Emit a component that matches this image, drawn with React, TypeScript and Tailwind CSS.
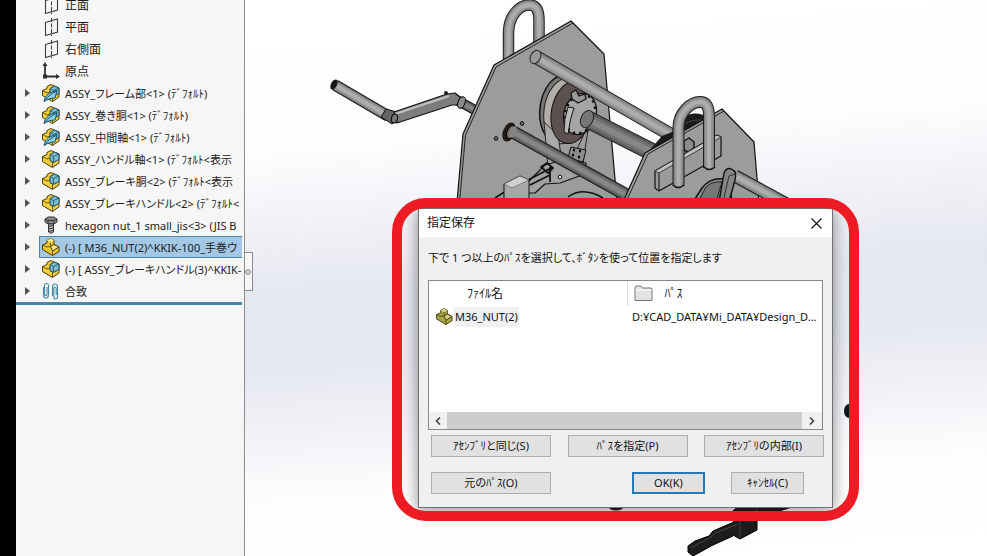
import { useState } from "react";
import type { ReactNode } from "react";
import clsx from "clsx";

type IconKind = "plane" | "origin" | "flexible" | "assembly" | "bolt" | "part" | "mates";

interface TreeItem {
  id: number;
  icon: IconKind;
  label: string;
  expandable: boolean;
}

const treeItems: TreeItem[] = [
  { id: 1, icon: "plane", label: "正面", expandable: false },
  { id: 2, icon: "plane", label: "平面", expandable: false },
  { id: 3, icon: "plane", label: "右側面", expandable: false },
  { id: 4, icon: "origin", label: "原点", expandable: false },
  { id: 5, icon: "flexible", label: "ASSY_フレーム部<1> (ﾃﾞﾌｫﾙﾄ)", expandable: true },
  { id: 6, icon: "flexible", label: "ASSY_巻き胴<1> (ﾃﾞﾌｫﾙﾄ)", expandable: true },
  { id: 7, icon: "flexible", label: "ASSY_中間軸<1> (ﾃﾞﾌｫﾙﾄ)", expandable: true },
  { id: 8, icon: "assembly", label: "ASSY_ハンドル軸<1> (ﾃﾞﾌｫﾙﾄ<表示", expandable: true },
  { id: 9, icon: "assembly", label: "ASSY_ブレーキ胴<2> (ﾃﾞﾌｫﾙﾄ<表示", expandable: true },
  { id: 10, icon: "assembly", label: "ASSY_ブレーキハンドル<2> (ﾃﾞﾌｫﾙﾄ<", expandable: true },
  { id: 11, icon: "bolt", label: "hexagon nut_1 small_jis<3> (JIS B", expandable: true },
  { id: 12, icon: "part", label: "(-) [ M36_NUT(2)^KKIK-100_手巻ウ", expandable: true },
  { id: 13, icon: "assembly", label: "(-) [ ASSY_ブレーキハンドル(3)^KKIK-", expandable: true },
  { id: 14, icon: "mates", label: "合致", expandable: true },
];

function PartShape({ body, light }: { body: string; light: string }) {
  return (
    <g stroke="#4a3d08" strokeWidth="1" strokeLinejoin="round">
      <path d="M.5 7 5 5V2.500L8.500 .5 12 2.500V6.500L17 9V13.500L10.500 17.500 .5 11.500Z" fill={body} />
      <path d="M5 2.500 8.500 .5 12 2.500 8.500 4.500Z" fill={light} stroke="none" />
      <path d="M8.500 8.500 12 6.500 17 9 10.500 13Z" fill={light} />
      <path d="M.5 7 5 9 8.500 8.500V4.500M10.500 13V17.500" fill="none" strokeWidth=".8" />
    </g>
  );
}

function TreeIcon({ kind }: { kind: IconKind }) {
  return (
    <svg viewBox="0 0 18 18" className="size-[18px] shrink-0" aria-hidden="true">
      {kind === "plane" && (
        <g fill="none" stroke="#3c3c3c" strokeWidth="1.1">
          <path d="M3.500 4.500 15.500 1V14L3.500 17.500Z" />
          <path d="M9.500 0V18" strokeDasharray="4 1.500" />
        </g>
      )}
      {kind === "origin" && (
        <g stroke="#2f2f2f" strokeWidth="1.800" fill="#2f2f2f">
          <path d="M3 3V14.500H16" fill="none" />
          <path d="M.5 4 3 0 5.500 4ZM14 12 18 14.500 14 17Z" stroke="none" />
          <rect x="1" y="12.500" width="4" height="4" stroke="none" />
        </g>
      )}
      {(kind === "assembly" || kind === "flexible") && (
        <g strokeLinejoin="round">
          <path
            d="M.5 6.500 5 4.500V2.500L9 .5 12 2 17 4V13L10.500 17.500 .5 11.500Z"
            fill="#f1cf3c"
            stroke="#4a3d08"
          />
          <path d="M.5 6.500 5 9 8 8M10.500 12.500V17.500M8 10.500 10.500 12.500" fill="none" stroke="#4a3d08" strokeWidth=".8" />
          <path d="M8 4.500 12.500 2 17 4V9.500L11.500 12.500 8 10.500Z" fill="#78bdd6" stroke="#1f4c5c" />
          <path d="M8 4.500 11.500 6.500 17 4M11.500 6.500V12" fill="none" stroke="#1f4c5c" strokeWidth=".8" />
        </g>
      )}
      {kind === "flexible" && (
        <g>
          <path d="M2 17.500C3 11 8 8 15 6.500L13 14C9 14 6 15 2 17.500Z" fill="#8fd0e6" stroke="#17506c" />
          <path d="M3 17C6 12 9 10 14 7.500" stroke="#17506c" fill="none" />
        </g>
      )}
      {kind === "bolt" && (
        <g stroke="#333" strokeLinejoin="round">
          <path d="M3 3 6 1H12L15 3V6L12 8H6L3 6Z" fill="#8a8a8a" />
          <path d="M3 3 6 4.500H12L15 3M6 4.500V8M12 4.500V8" fill="none" />
          <path d="M6.500 8H11.500V16L9 17.500 6.500 16Z" fill="#bdbdbd" />
          <path d="M6.500 10.500 11.500 9.500M6.500 13 11.500 12M6.500 15.500 11.500 14.500" />
        </g>
      )}
      {kind === "part" && <PartShape body="#efc52d" light="#fbe88a" />}
      {kind === "mates" && (
        <g fill="none" stroke="#4489a3" strokeWidth="1.100">
          <path d="M1.500 5V13Q1.500 16 4 16T6.500 13V3.500Q6.500 1.500 4.500 1.500T2.500 3.500V12Q2.500 13.500 3.800 13.500T5 12V5" />
          <path d="M10.500 14V5Q10.500 2 13 2T15.500 5V14.500Q15.500 17 13.500 17T11.800 14.500V6.500Q11.800 5 13 5T14.200 6.500V13" />
        </g>
      )}
    </svg>
  );
}

function FeatureTree() {
  const [selected, setSelected] = useState(12);

  return (
    <aside className="w-[229px] shrink-0 border-r border-[#8c8c8c] bg-[#f6f6f6] pr-0.5">
      <ul className="-mt-1.5 border-b-[3px] border-[#4a86a8]">
        {treeItems.map((item) => (
          <li key={item.id} className="flex h-[22px] items-center">
            <span className="flex w-[23px] shrink-0 justify-center">
              {item.expandable && (
                <button aria-label="展開" className="cursor-pointer">
                  <svg viewBox="0 0 5 8" className="h-2 w-[5px]">
                    <path d="M0 0 5 4 0 8Z" fill="#555" />
                  </svg>
                </button>
              )}
            </span>
            <button
              onClick={() => setSelected(item.id)}
              className={clsx(
                "flex h-[22px] min-w-0 flex-1 items-center gap-[5px] border border-r-0 pl-0.5 text-left",
                selected === item.id ? "border-[#4f86a8] bg-[#a3c8e6]" : "border-transparent"
              )}
            >
              <TreeIcon kind={item.icon} />
              <span
                className={clsx(
                  "whitespace-pre pt-0.5 leading-[18px] text-[#1c1c1c]",
                  item.expandable ? "text-[11px]" : "text-[12px]"
                )}
              >
                {item.label}
              </span>
            </button>
          </li>
        ))}
      </ul>
    </aside>
  );
}

function Tube({ d, w, dark = false }: { d: string; w: number; dark?: boolean }) {
  return (
    <g fill="none">
      <path d={d} stroke="#1d1d1d" strokeWidth={w + 2} />
      <path d={d} stroke={dark ? "#5a5a5a" : "#808080"} strokeWidth={w} />
      <path d={d} stroke={dark ? "#707070" : "#979797"} strokeWidth={w * 0.75} />
      <path d={d} stroke={dark ? "#868686" : "#adadad"} strokeWidth={w * 0.4} />
    </g>
  );
}

// Hand winch assembly, drawn in screen coordinates
function WinchModel() {
  return (
    <svg
      viewBox="245 0 742 556"
      className="absolute top-0 left-0 h-[556px] w-[742px]"
      strokeLinejoin="round"
      aria-hidden="true"
    >
      {/* crank */}
      <Tube d="M453 98 482 114" w={8} dark />
      <Tube d="M335 85 388 116" w={9.500} />
      <ellipse cx="334" cy="84.500" rx="3" ry="5.500" transform="rotate(28 334 84.500)" fill="#161616" />
      <path d="M386 109 381 117 392 124 399 119 397 112Z" fill="#666" stroke="#111" />
      <path d="M394 112 447 94 455 93 461 98 459 105 452 105 397 123Z" fill="#7d7d7d" stroke="#111" strokeWidth="1.200" />
      <path d="M395 114 449 96" stroke="#c0c0c0" strokeWidth="2" />
      <circle cx="446" cy="93" r="2" fill="#222" />
      <ellipse cx="394.500" cy="118.500" rx="3" ry="4.500" transform="rotate(15 394.500 118.500)" fill="#777" stroke="#000" />
      <ellipse cx="461.500" cy="102.500" rx="3.500" ry="6" transform="rotate(20 461.500 102.500)" fill="#8c8c8c" stroke="#000" />

      {/* rear plate */}
      <Tube d="M508.500 64V32C509 15 520 5 529 5 536 5 539 10 539 20V50" w={9.500} />
      <path d="M457 202 463 134 494 65 571 21 604 54 607 88 617 202Z" fill="#9c9c9c" stroke="#111" strokeWidth="1.200" />
      <path d="M459.500 202 465.500 135 496 67 573 23" fill="none" stroke="#222" strokeWidth="1" />

      {/* drum and ratchet */}
      <ellipse cx="561" cy="109" rx="21" ry="34" transform="rotate(8 561 109)" fill="#777" stroke="#111" strokeWidth="1.500" />
      <ellipse cx="565" cy="111" rx="21" ry="33" transform="rotate(8 565 111)" fill="#b2aea9" stroke="#222" />
      <path d="M544 122 548 167 562 162 558 135Z" fill="#a9a9a9" stroke="#222" />
      <ellipse cx="572" cy="112" rx="20.500" ry="32" transform="rotate(12 572 112)" fill="#5c5150" stroke="#111" />
      <path d="M586 130 571 162 583 162 589 124Z" fill="#9c9c9c" stroke="#222" />
      <path d="M592 92 600 76 606 100 608 140 596 140Z" fill="#9c9c9c" />
      <ellipse cx="580" cy="114" rx="16" ry="21" transform="rotate(18 580 114)" fill="#a5a5a5" stroke="#111" strokeWidth="1.300" />
      <ellipse cx="580" cy="114" rx="15" ry="20" transform="rotate(18 580 114)" fill="none" stroke="#111" strokeWidth="3" strokeDasharray="2.500 4" />
      <path d="M568 107Q564 118 564 132L568 134Q570 118 574 108Z" fill="#bbb" stroke="#111" />
      <path d="M571 93 576 90 579 96 585 94 586 99 578 103 572 99Z" fill="#999" stroke="#111" strokeWidth="1.300" />
      <Tube d="M587 119 652 152" w={16} dark />
      <ellipse cx="587" cy="119" rx="6" ry="9" transform="rotate(25 587 119)" fill="#777" stroke="#222" />
      <Tube d="M536 57 680 140" w={12} />
      <ellipse cx="535.500" cy="57" rx="5" ry="7" transform="rotate(28 535.500 57)" fill="#999" stroke="#222" />

      {/* brake linkage */}
      <path d="M571 147 586 150 583 162 568 158Z" fill="#8c8c8c" stroke="#111" />
      <path d="M573 150H575M579 151H581M572 155H574M578 157H580" stroke="#000" strokeWidth="2.500" />
      <path d="M527 183 545 165 566 159 586 163 585 174 560 183 545 184 535 193 527 193Z" fill="#a2a2a2" stroke="#111" strokeWidth="1.200" />
      <path d="M528 180 553 167M530 185 550 175M550 167V182M541 167 547 163 553 168 548 173Z" fill="none" stroke="#111" strokeWidth="1.800" />
      <circle cx="560" cy="177" r="1.800" fill="#eee" stroke="#111" />
      <path d="M495 198 506 191M568 197Q583 186 603 198" fill="none" stroke="#111" strokeWidth="1.500" />
      <path d="M504 184 520 176 529 180V200H504Z" fill="#a8a8a8" stroke="#111" />
      <path d="M504 184 512 188 529 180 520 176Z" fill="#cfcfcf" stroke="#555" strokeWidth=".6" />

      <ellipse cx="509" cy="132" rx="6" ry="10" transform="rotate(22 509 132)" fill="#211b18" />
      <ellipse cx="511" cy="132" rx="4" ry="7" transform="rotate(22 511 132)" fill="#756a60" stroke="#000" />
      <Tube d="M513 132 632 198" w={11} dark />
      <ellipse cx="513" cy="132" rx="3.500" ry="6" transform="rotate(26 513 132)" fill="#858585" />
      <circle cx="496" cy="138.500" r="1.800" fill="#777" stroke="#000" />
      <circle cx="522" cy="123.500" r="1.800" fill="#777" stroke="#000" />

      {/* front plate */}
      <path d="M648 152 662 136 672 132 682 117Q697 110 707 117L690 140Z" fill="#1b1b1b" />
      <path d="M684 124Q696 118 704 121" fill="none" stroke="#777" strokeDasharray="1.500 1.500" />
      <path d="M623 202 645 153 722 109 754 142 759 202Z" fill="#9c9c9c" stroke="#111" strokeWidth="1.200" />
      <path d="M626 202 648 154 724 111" fill="none" stroke="#222" />
      <path d="M684 141 689 138 694 142 694 148 688 152 684 150Z" fill="#8c8c8c" stroke="#111" strokeWidth="1.400" />
      <path d="M655 171 717 135 721 137V156L659 191 655 188Z" fill="#9a9a9a" stroke="#111" strokeWidth="1.200" />
      <path d="M655 171 717 135 721 137 659 173Z" fill="#c2c2c2" stroke="#222" strokeWidth=".8" />
      <path d="M659 173V191" stroke="#111" />
      <Tube d="M678.500 186V127C679 112 691 102 700 102 707 102 709 107 709 117V168" w={10} />
      <path d="M673 185Q678 190 684 185M704 167Q709 172 715 167" fill="none" stroke="#111" strokeWidth="1.500" />
      <path d="M693 202 702 188Q710 177 725 179L733 202Z" fill="#8b8b8b" stroke="#111" strokeWidth="1.500" />
      <path d="M698 202 706 187Q712 181 722 182L716 202Z" fill="#777" stroke="#222" />
      <Tube d="M735 176 792 207" w={11} />
      <path d="M719 202 724 173Q727 166 733 170 737 172 735 180L729 202Z" fill="#868686" stroke="#111" strokeWidth="1.400" />
      <path d="M723 202 729 176 735 174" fill="none" stroke="#333" />

      {/* parts below the dialog */}
      <ellipse cx="849" cy="411" rx="5" ry="7" fill="#11151f" />
      <ellipse cx="616" cy="506" rx="8" ry="4.500" fill="#202020" />
      <path d="M728 515 740 505H798L776 512 757 518V530L740 539 733 535V536L713 545 693 556 688 552V546L695 541 709 536 713 531 734 522Z" fill="#1d1d1d" stroke="#000" />
      <path d="M740 520V538M691 548 711 537 715 533 738 524M757 508V518" fill="none" stroke="#444" />
    </svg>
  );
}

function DialogButton({
  children,
  primary = false,
  small = false,
}: {
  children: ReactNode;
  primary?: boolean;
  small?: boolean;
}) {
  return (
    <button
      className={clsx(
        "flex h-[22px] items-center justify-center whitespace-nowrap bg-[#e1e1e1] text-[11px] leading-4 text-[#111]",
        small ? "w-[73px]" : "w-[120px]",
        primary ? "border-2 border-[#2878b4]" : "border border-[#adadad]"
      )}
    >
      {children}
    </button>
  );
}

function FileTable() {
  return (
    <table className="w-full table-fixed border-collapse text-left">
      <colgroup>
        <col className="w-[198px]" />
        <col />
      </colgroup>
      <thead>
        <tr className="h-[25px] text-[12px] leading-4">
          <th className="border-r border-[#dedede] pl-[38px] font-normal">ﾌｧｲﾙ名</th>
          <th className="pl-1.5 font-normal">
            <span className="flex items-center gap-3">
              <svg viewBox="0 0 19 17" className="h-[17px] w-[19px]" aria-hidden="true">
                <path d="M1 15.500V2.500L2 1H7L8.500 3H17L18 4V15.500Z" fill="#e3e3e3" stroke="#777" />
                <path d="M1.500 5H17.500" stroke="#fff" />
              </svg>
              ﾊﾟｽ
            </span>
          </th>
        </tr>
      </thead>
      <tbody>
        <tr className="h-[21px] text-[11px] leading-4">
          <td className="p-0 pl-[7px]">
            <span className="flex items-center gap-px">
              <svg viewBox="0 0 18 18" className="size-[17px]" aria-hidden="true">
                <PartShape body="#a8a648" light="#d3d183" />
              </svg>
              <span className="bg-[#f0f0f0] px-px py-0.5">M36_NUT(2)</span>
            </span>
          </td>
          <td className="truncate p-0 pl-[5px]">D:¥CAD_DATA¥Mi_DATA¥Design_D...</td>
        </tr>
      </tbody>
    </table>
  );
}

function SaveAsDialog() {
  return (
    <div
      role="dialog"
      aria-labelledby="dialog-title"
      className="w-[415px] border border-[#707070] bg-[#f0f0f0] text-[#111] shadow-[0_2px_14px_rgba(0,0,0,0.45)]"
    >
      <header className="flex h-7 items-center justify-between bg-white pr-2.5 pl-2">
        <h1 id="dialog-title" className="text-[12px] leading-4">
          指定保存
        </h1>
        <button aria-label="閉じる" className="cursor-pointer">
          <svg viewBox="0 0 11 11" className="size-[11px]">
            <path d="M.5 .5 10.500 10.500M10.500 .5 .5 10.500" stroke="#111" strokeWidth="1.100" />
          </svg>
        </button>
      </header>

      <div className="px-[9px] pt-[11px] pb-[13px]">
        <p className="whitespace-nowrap text-[11px] leading-5">
          下で 1 つ以上のﾊﾟｽを選択して、ﾎﾞﾀﾝを使って位置を指定します
        </p>

        <div className="mt-3 flex h-[150px] flex-col justify-between border border-[#828790] bg-white">
          <FileTable />
          <div className="flex h-[17px] items-stretch bg-[#f0f0f0]">
            <button aria-label="左へスクロール" className="flex w-[18px] items-center justify-center">
              <svg viewBox="0 0 6 8" className="h-2 w-1.5">
                <path d="M5 .5 1.500 4 5 7.500" fill="none" stroke="#444" strokeWidth="1.600" />
              </svg>
            </button>
            <div className="flex-1 bg-[#cdcdcd]" />
            <button aria-label="右へスクロール" className="flex w-5 items-center justify-center">
              <svg viewBox="0 0 6 8" className="h-2 w-1.5">
                <path d="M1 .5 4.500 4 1 7.500" fill="none" stroke="#444" strokeWidth="1.600" />
              </svg>
            </button>
          </div>
        </div>

        <div className="-mr-px mt-[5px] ml-[3px] flex justify-between">
          <DialogButton>ｱｾﾝﾌﾞﾘと同じ(S)</DialogButton>
          <DialogButton>ﾊﾟｽを指定(P)</DialogButton>
          <DialogButton>ｱｾﾝﾌﾞﾘの内部(I)</DialogButton>
        </div>
        <div className="mt-[15px] mr-[19px] ml-[3px] flex">
          <DialogButton>元のﾊﾟｽ(O)</DialogButton>
          <div className="ml-auto flex gap-[26px]">
            <DialogButton primary small>
              OK(K)
            </DialogButton>
            <DialogButton small>ｷｬﾝｾﾙ(C)</DialogButton>
          </div>
        </div>
      </div>
    </div>
  );
}

function Viewport() {
  return (
    <main className="relative flex-1 overflow-hidden bg-[linear-gradient(176deg,#ffffff_0%,#fdfdfe_25%,#e4e7ef_50%,#e6e9f0_62%,#fcfcfd_82%,#ffffff_100%)]">
      <WinchModel />

      {/* panel splitter handle */}
      <div className="absolute top-[252px] left-0 flex h-[39px] w-2 items-center border border-l-0 border-[#8c8c8c] bg-[#f6f6f6]">
        <span className="size-1.5 rounded-full border border-[#999] bg-[#ccc]" />
      </div>

      <div className="absolute top-[198px] left-[147px] pt-2.5 pr-[26px] pb-[13px] pl-[26px]">
        <SaveAsDialog />
        <div className="pointer-events-none absolute inset-0 rounded-[34px] border-10 border-[#ed1c24]" />
      </div>
    </main>
  );
}

export default function App() {
  return (
    <div className="flex min-h-screen bg-white font-['Noto_Sans','Noto_Sans_CJK_JP',sans-serif] [font-feature-settings:'palt']">
      <div className="w-4 shrink-0 bg-black" />
      <FeatureTree />
      <Viewport />
    </div>
  );
}
